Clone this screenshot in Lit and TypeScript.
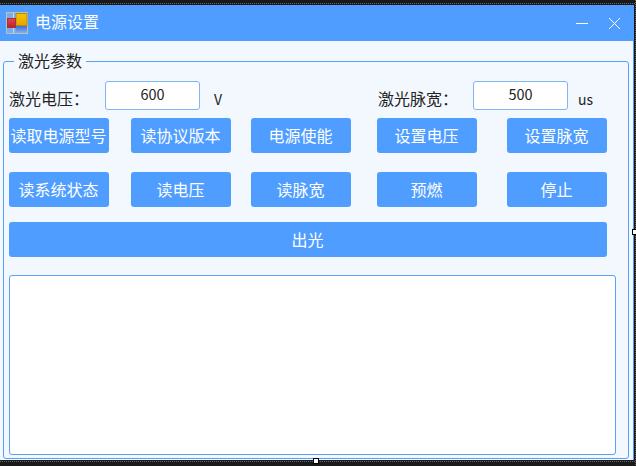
import { LitElement, html, css } from "lit";
import { customElement } from "lit/decorators.js";

@customElement("app-root")
export class AppRoot extends LitElement {
  static styles = css`
    :host {
      display: block;
      width: 636px;
      height: 466px;
      position: relative;
      overflow: hidden;
      background-color: #1a1a1a;
      background-image:
        repeating-linear-gradient(90deg, #666 0 1px, #1a1a1a 1px 2px),
        repeating-linear-gradient(90deg, #666 0 1px, #1a1a1a 1px 2px),
        repeating-linear-gradient(180deg, #666 0 1px, #1a1a1a 1px 2px);
      background-size: 100% 1px, 100% 1px, 1px 100%;
      background-position: 0 3px, 0 461px, 635px 0;
      background-repeat: no-repeat;
      font-family: "Noto Sans CJK SC", "Liberation Sans", sans-serif;
      font-size: 16px;
      color: #222;
    }
    .spacer { height: 5px; }
    .window {
      width: 633px;
      height: 455px;
      background: #f3f8ff;
      border-right: 1px solid #4f9eff;
      box-sizing: content-box;
      display: flex;
      flex-direction: column;
    }
    .titlebar {
      height: 36px;
      background: #4f9eff;
      display: flex;
      align-items: center;
      color: #fff;
      font-size: 16px;
      padding-left: 6px;
      flex: none;
    }
    .logo { width: 22px; height: 22px; flex: none; margin-top: -1px; }
    .title { margin-left: 7px; position: relative; top: -2px; }
    .win-btns { margin-left: auto; display: flex; gap: 19px; margin-right: 12px; }
    .win-btns svg { display: block; }
    .group {
      flex: 1;
      position: relative;
      margin: 20px 4px 1px 3px;
      border: 1px solid #58a0f8;
      border-radius: 3px;
      padding: 19px 0 0 5px;
      min-height: 0;
    }
    .legend {
      position: absolute;
      top: -13px;
      left: 10px;
      padding: 0 4px;
      background: #f3f8ff;
      line-height: 22px;
    }
    .row { display: flex; align-items: center; }
    .params { height: 29px; }
    .label { line-height: 20px; margin-top: 5px; }
    .input {
      width: 95px;
      height: 29px;
      box-sizing: border-box;
      background: #fff;
      border: 1px solid #7fb4f5;
      border-radius: 3px;
      text-align: center;
      line-height: 23px;
      font-size: 14.5px;
    }
    .l1 { width: 96px; flex: none; }
    .l2 { width: 95px; flex: none; }
    .unit { font-size: 14px; margin-top: 6px; }
    .u1 { margin-left: 14px; width: 164px; flex: none; }
    .u2 { margin-left: 10px; }
    .btns { margin-top: 8px; height: 35px; }
    .btns.second { margin-top: 19px; }
    .btn {
      height: 35px;
      width: 100px;
      flex: none;
      display: flex;
      align-items: center;
      justify-content: center;
      box-sizing: border-box;
      padding: 0 1px 2px 0;
      background: #4f9eff;
      color: #fff;
      border-radius: 3px;
      white-space: nowrap;
    }
    .b2 { margin-left: 22px; }
    .b3 { margin-left: 20px; }
    .b4 { margin-left: 26px; }
    .b5 { margin-left: 30px; }
    .btn.wide { width: 598px; margin-top: 15px; }
    .log {
      width: 607px;
      height: 180px;
      margin-top: 18px;
      box-sizing: border-box;
      background: #fff;
      border: 1px solid #58a0f8;
      border-radius: 3px;
    }
    .handle {
      position: absolute;
      width: 4px;
      height: 4px;
      background: #fff;
      border: 1px solid #000;
    }
    .h-bottom { left: 313px; top: 458px; }
    .h-right { left: 632px; top: 229px; }
  `;

  render() {
    const row1 = ["读取电源型号", "读协议版本", "电源使能", "设置电压", "设置脉宽"];
    const row2 = ["读系统状态", "读电压", "读脉宽", "预燃", "停止"];
    const cls = ["", "b2", "b3", "b4", "b5"];
    return html`
      <div class="spacer"></div>
      <div class="window">
        <div class="titlebar">
          <svg class="logo" viewBox="0 0 22 22">
            <defs>
              <linearGradient id="ly" x1="0" y1="0" x2="0" y2="1">
                <stop offset="0" stop-color="#f6c400" /><stop offset="1" stop-color="#e8a400" />
              </linearGradient>
              <linearGradient id="lr" x1="0" y1="0" x2="0" y2="1">
                <stop offset="0" stop-color="#e04848" /><stop offset="1" stop-color="#b82030" />
              </linearGradient>
              <linearGradient id="lb" x1="0" y1="0" x2="0" y2="1">
                <stop offset="0" stop-color="#3f70d8" /><stop offset="1" stop-color="#86b0ea" />
              </linearGradient>
            </defs>
            <rect x="0.5" y="0.5" width="21" height="21" fill="#78aef0" stroke="#b9c4b8" />
            <path d="M7.5 1v20M1 15.5h20M1 7.5h8" stroke="#cfdcd8" fill="none" />
            <rect x="10" y="1.5" width="11" height="12" fill="url(#ly)" stroke="#b98a10" />
            <rect x="1.5" y="6.5" width="8" height="9" fill="url(#lr)" stroke="#a83038" />
            <rect x="10" y="14" width="11" height="7" fill="url(#lb)" />
          </svg>
          <span class="title">电源设置</span>
          <div class="win-btns">
            <svg width="13" height="13" viewBox="0 0 13 13"><path d="M0 6.5h12" stroke="#fff" /></svg>
            <svg width="13" height="13" viewBox="0 0 13 13"><path d="M1 1l11 11M12 1L1 12" stroke="#fff" /></svg>
          </div>
        </div>
        <div class="group">
          <div class="legend">激光参数</div>
          <div class="row params">
            <span class="label l1">激光电压：</span>
            <div class="input">600</div>
            <span class="unit u1">V</span>
            <span class="label l2">激光脉宽：</span>
            <div class="input">500</div>
            <span class="unit u2">us</span>
          </div>
          <div class="row btns">
            ${row1.map((t, i) => html`<div class="btn ${cls[i]}">${t}</div>`)}
          </div>
          <div class="row btns second">
            ${row2.map((t, i) => html`<div class="btn ${cls[i]}">${t}</div>`)}
          </div>
          <div class="btn wide">出光</div>
          <div class="log"></div>
        </div>
      </div>
      <div class="handle h-bottom"></div>
      <div class="handle h-right"></div>
    `;
  }
}
